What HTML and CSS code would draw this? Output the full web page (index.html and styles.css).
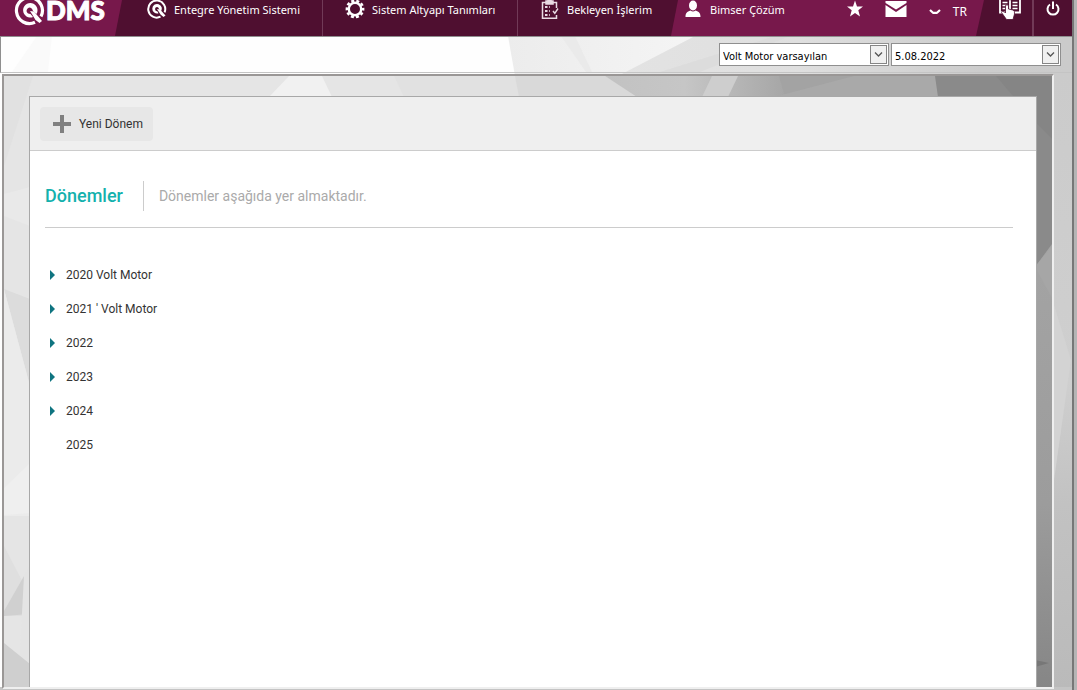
FILE: index.html
```html
<!DOCTYPE html>
<html lang="tr">
<head>
    <title>QDMS - Dönemler</title>
    <meta charset="UTF-8">
    <link rel="stylesheet" href="styles.css">
</head>
<body>
    <div class="page">
        <svg class="backdrop" viewBox="0 0 1072 690" preserveAspectRatio="none" aria-hidden="true">
            <defs>
                <linearGradient id="side" x1="0" y1="0" x2="0" y2="1">
                    <stop offset="0" stop-color="#cbcbcb"/>
                    <stop offset="0.5" stop-color="#cfcfcf"/>
                    <stop offset="0.7" stop-color="#c2c2c2"/>
                    <stop offset="1" stop-color="#bababa"/>
                </linearGradient>
                <linearGradient id="light" x1="0" y1="0" x2="1" y2="0">
                    <stop offset="0" stop-color="#ececec"/>
                    <stop offset="1" stop-color="#f5f5f5"/>
                </linearGradient>
                <linearGradient id="dark" x1="0" y1="0" x2="1" y2="0">
                    <stop offset="0" stop-color="#e3e3e3"/>
                    <stop offset="0.4" stop-color="#dfdfdf"/>
                    <stop offset="0.8" stop-color="#cccccc"/>
                    <stop offset="1" stop-color="#cbcbcb"/>
                </linearGradient>
            </defs>
            <rect width="1072" height="690" fill="#fefefe"/>
            <polygon points="37,36 52,36 48,72 12,72" fill="#fafafa"/>
            <polygon points="508,36 700,36 622,76 515,76" fill="url(#light)"/>
            <polygon points="561,36 575,36 592,72 586,72" fill="#eaeaea"/>
            <polygon points="695,36 1072,36 1072,76 618,76" fill="url(#dark)"/>
            <polygon points="775,36 790,36 700,72 660,72" fill="#dcdcdc"/>
            <rect x="1052" y="72" width="20" height="618" fill="url(#side)"/>
            <rect y="687" width="1072" height="3" fill="#c4c4c4"/>
            <polygon points="1054,305 1071,360 1054,480" fill="#d3d3d3"/>
        </svg>

        <header class="header">
            <a class="logo" href="#" aria-label="QDMS">
                <svg width="32" height="26" viewBox="0 0 32 26" aria-hidden="true">
                    <path d="M21 22.300 A13 13 0 1 1 27 16.500" fill="none" stroke="#fff" stroke-width="3.200"/>
                    <path d="M22.500 14 A7.200 7.200 0 1 0 19 17 L16.500 14 Q13 14 12.500 11 Q13 7.500 16 7.500 Q18.500 8 19 11 Z" fill="#fff"/>
                    <path d="M16 11 L20 11.500 L28 21 L25.500 23 L21.500 20 L18.500 15 Z" fill="#fff"/>
                </svg>
                <span>DMS</span>
            </a>
            <nav class="menu">
                <a href="#">
                    <svg width="20" height="20" viewBox="0 0 20 20" aria-hidden="true">
                        <path d="M13.500 16.700 A8.500 8.500 0 1 1 17.600 12.300" fill="none" stroke="#fff" stroke-width="2"/>
                        <path d="M14 11.500 A4.800 4.800 0 1 0 11.500 13.300 L10.500 11.500 Q8 11 8 9 Q8.200 7 10 7 Q11.500 7.200 12 9 Z" fill="#fff"/>
                        <path d="M10 9 L13 9.500 L18.500 15.500 L16.500 17 L13.500 14.500 Z" fill="#fff"/>
                    </svg>
                    Entegre Yönetim Sistemi
                </a>
                <a href="#">
                    <svg width="20" height="20" viewBox="0 0 20 20" aria-hidden="true">
                        <circle cx="10" cy="9" r="6.200" fill="none" stroke="#fff" stroke-width="2.400"/>
                        <circle cx="10" cy="9" r="8.200" fill="none" stroke="#fff" stroke-width="2.400" stroke-dasharray="3 2.152" stroke-dashoffset="1.500"/>
                    </svg>
                    Sistem Altyapı Tanımları
                </a>
                <a href="#">
                    <svg width="20" height="20" viewBox="0 0 20 20" fill="none" stroke="#e9dbe3" stroke-width="1.500" aria-hidden="true">
                        <path d="M6 2.500 H2.500 V18.300 H16.500 V15 M16.500 8 V2.500 H13"/>
                        <path d="M6 4 H13 V1 H11 V-1 H8 V1 H6 Z" fill="#e9dbe3"/>
                        <path d="M5 7 H7.500 M5 11 H7.500 M5 15 H7.500" stroke-width="2.200"/>
                        <path d="M9 7 H10 M9 11 H10 M9 15 H10"/>
                        <path d="M13 11 L14.800 13.300 L18 8.500"/>
                    </svg>
                    Bekleyen İşlerim
                </a>
            </nav>
            <div class="account">
                <a class="user" href="#">
                    <svg width="16" height="18" viewBox="0 0 16 18" fill="#fff" aria-hidden="true">
                        <ellipse cx="8" cy="5.500" rx="4" ry="5"/>
                        <path d="M0.500 17 C0.500 13 2 11.500 5.500 10.500 Q8 12.500 10.500 10.500 C14 11.500 15.500 13 15.500 17 Z"/>
                    </svg>
                    Bimser Çözüm
                </a>
                <button type="button" aria-label="Sık kullanılanlar">
                    <svg width="18" height="18" viewBox="0 0 18 18" aria-hidden="true">
                        <path d="M9 0.500 L11 6.500 L17 6.500 L12.300 10.300 L14 16.500 L9 13 L4 16.500 L5.700 10.300 L1 6.500 L7 6.500 Z" fill="#fff"/>
                    </svg>
                </button>
                <button type="button" aria-label="Mesajlar">
                    <svg width="22" height="18" viewBox="0 0 22 18" fill="#fff" aria-hidden="true">
                        <path d="M0.500 1 H21.500 V3 L11 9.500 L0.500 3 Z"/>
                        <path d="M0.500 5 L11 12 L21.500 5 V17 H0.500 Z"/>
                    </svg>
                </button>
                <button class="language" type="button">
                    <svg width="12" height="6" viewBox="0 0 12 6" aria-hidden="true">
                        <path d="M1 1 L4 3.800 H8 L11 1" fill="none" stroke="#fff" stroke-width="2.200" stroke-linejoin="round"/>
                    </svg>
                    TR
                </button>
            </div>
            <button class="help" type="button" aria-label="Yardım">
                <svg width="22" height="21" viewBox="0 0 22 21" aria-hidden="true">
                    <path d="M1 -2 H9 L11 0 L13 -2 H21 V12.500 H1 Z M11 0 V12" fill="none" stroke="#fff" stroke-width="1.800"/>
                    <path d="M3.500 2.500 H8.500 M3.500 5.500 H8.500 M3.500 8.500 H8.500 M13.500 2.500 H18.500 M13.500 5.500 H18.500 M13.500 8.500 H18.500" stroke="#fff" stroke-width="1.400"/>
                    <path d="M6.500 5.500 Q8 4 9.500 5.500 V9 L14 10 Q16 11 15.500 14 L14 19.500 H7.500 L2.500 12.500 Q3.500 10.500 5.500 12 L6.500 13 Z" fill="#fff" stroke="#4f0f30" stroke-width="0.800"/>
                </svg>
            </button>
            <button class="power" type="button" aria-label="Çıkış">
                <svg width="14" height="16" viewBox="0 0 14 16" fill="none" stroke="#fff" stroke-width="2" aria-hidden="true">
                    <path d="M4 3.500 A5.500 5.500 0 1 0 10 3.500"/>
                    <path d="M7 0.500 V8"/>
                </svg>
            </button>
        </header>

        <form class="filters">
            <label class="dropdown">
                <select aria-label="Şirket">
                    <option>Volt Motor varsayılan</option>
                </select>
                <svg viewBox="0 0 17 20" aria-hidden="true">
                    <rect x="0.500" y="0.500" width="16" height="18" fill="#f0f0f0" stroke="#858585"/>
                    <path d="M5 7.500 L8.500 11 L12 7.500" fill="none" stroke="#555" stroke-width="1.300"/>
                </svg>
            </label>
            <label class="dropdown">
                <select aria-label="Tarih">
                    <option>5.08.2022</option>
                </select>
                <svg viewBox="0 0 17 20" aria-hidden="true">
                    <rect x="0.500" y="0.500" width="16" height="18" fill="#f0f0f0" stroke="#858585"/>
                    <path d="M5 7.500 L8.500 11 L12 7.500" fill="none" stroke="#555" stroke-width="1.300"/>
                </svg>
            </label>
        </form>

        <div class="frame">
            <svg class="backdrop" viewBox="0 0 1048 611" preserveAspectRatio="none" aria-hidden="true">
                <defs>
                    <linearGradient id="right" x1="0" y1="0" x2="0" y2="1">
                        <stop offset="0" stop-color="#a9a9a9"/>
                        <stop offset="0.7" stop-color="#9c9c9c"/>
                        <stop offset="1" stop-color="#868686"/>
                    </linearGradient>
                    <linearGradient id="top" x1="0" y1="0" x2="1" y2="0">
                        <stop offset="0" stop-color="#c2c2c2"/>
                        <stop offset="0.4" stop-color="#c6c6c6"/>
                        <stop offset="1" stop-color="#a0a0a0"/>
                    </linearGradient>
                </defs>
                <rect width="1048" height="611" fill="#e5e5e5"/>
                <polygon points="0,0 29,0 0,90" fill="#e1e1e1"/>
                <polygon points="0,118 26,111 26,150 0,140" fill="#e9e9e9"/>
                <polygon points="0,213 26,223 26,310" fill="#dcdcdc"/>
                <polygon points="0,213 26,310 26,440 0,440" fill="#ebebeb"/>
                <polygon points="0,412 26,387 26,437 0,439" fill="#efefef"/>
                <polygon points="0,470 26,520 26,540 0,540" fill="#dfdfdf"/>
                <polygon points="0,535 20,500 26,500 26,538 0,540" fill="#d0d0d0"/>
                <polygon points="20,500 26,490 26,611 14,611" fill="#e4e4e4"/>
                <polygon points="0,567 26,588 26,611 0,611" fill="#cfcfcf"/>
                <polygon points="265,21 285,0 318,0 328,21" fill="#f1f1f1"/>
                <polygon points="390,0 515,0 515,21 400,21" fill="#e1e1e1"/>
                <polygon points="511,0 601,0 635,21 515,21" fill="#d9d9d9"/>
                <polygon points="601,0 800,0 800,21 633,21" fill="url(#top)"/>
                <polygon points="708,0 734,0 724,21 698,21" fill="#cecece"/>
                <polygon points="775,0 935,0 935,21 781,21" fill="#a3a3a3"/>
                <polygon points="850,0 932,0 935,21 770,21" fill="#a9a9a9"/>
                <rect x="1030" width="18" height="611" fill="url(#right)"/>
                <polygon points="931,0 1048,0 1048,168 1031,191 1031,21 934,21" fill="#8a8a8a"/>
                <polygon points="992,0 1048,0 1048,63 1031,46" fill="#858585"/>
                <polygon points="1031,191 1048,170 1048,222" fill="#a6a6a6"/>
                <polygon points="1031,584 1045,587 1031,591" fill="#777"/>
            </svg>
            <main class="panel">
                <div class="toolbar">
                    <button class="new-period" type="button">
                        <svg width="18" height="18" viewBox="0 0 18 18" aria-hidden="true">
                            <path d="M9 0 V18 M0 9 H18" stroke="#808080" stroke-width="4"/>
                        </svg>
                        Yeni Dönem
                    </button>
                </div>
                <div class="title">
                    <h1>Dönemler</h1>
                    <p>Dönemler aşağıda yer almaktadır.</p>
                </div>
                <ul class="periods">
                    <li><button class="expand" type="button" aria-label="Genişlet"></button><a href="#">2020 Volt Motor</a></li>
                    <li><button class="expand" type="button" aria-label="Genişlet"></button><a href="#">2021 ' Volt Motor</a></li>
                    <li><button class="expand" type="button" aria-label="Genişlet"></button><a href="#">2022</a></li>
                    <li><button class="expand" type="button" aria-label="Genişlet"></button><a href="#">2023</a></li>
                    <li><button class="expand" type="button" aria-label="Genişlet"></button><a href="#">2024</a></li>
                    <li class="leaf"><a href="#">2025</a></li>
                </ul>
            </main>
        </div>
    </div>
</body>
</html>
```

FILE: styles.css
```css
* {
    box-sizing: border-box;
}
body {
    margin: 0;
    background-color: #b5b5b5;
    font-family: Roboto, Arial, sans-serif;
    font-size: 12px;
    color: #333;
}
button {
    margin: 0;
    padding: 0;
    border: none;
    background: none;
    color: inherit;
    font: inherit;
    cursor: pointer;
}
a {
    color: inherit;
    text-decoration: none;
}
svg {
    display: block;
    flex-shrink: 0;
}
.page {
    position: relative;
    z-index: 0;
    display: flex;
    flex-direction: column;
    min-height: 100vh;
    margin-right: 3px;
    border-right: 2px solid #777;
}
.backdrop {
    position: absolute;
    inset: 0;
    z-index: -1;
    width: 100%;
    height: 100%;
}

/* header */
.header {
    display: flex;
    height: 37px;
    border-bottom: 1px solid #8f8f8f;
    background-color: #4f0f30;
    color: #fff;
    font-family: "Segoe UI", "Noto Sans", sans-serif;
    font-size: 11px;
    line-height: 20px;
}
.logo {
    display: flex;
    width: 122px;
    padding-left: 14px;
    background-color: #77184b;
    clip-path: polygon(0 0, 100% 0, 115px 100%, 0 100%);
    font-family: Lato, sans-serif;
    font-size: 26px;
    font-weight: 900;
    -webkit-text-stroke: 1px #fff;
}
.menu {
    display: grid;
    flex: 1;
    grid-template-columns: 200fr 195fr 154fr;
}
.menu a {
    display: flex;
    gap: 7px;
    padding-left: 25px;
    white-space: nowrap;
}
.menu a + a {
    padding-left: 22px;
    border-left: 1px solid #713a57;
}
.account {
    display: flex;
    width: 313px;
    padding-left: 14px;
    background-color: #77184b;
    clip-path: polygon(7px 0, 100% 0, calc(100% - 8px) 100%, 0 100%);
}
.account button {
    display: flex;
    align-items: flex-start;
    margin-right: 21px;
}
.user {
    display: flex;
    flex: 1;
    gap: 9px;
}
.account .language {
    gap: 12px;
    margin-right: 17px;
    padding-left: 1px;
    font-size: 12px;
    line-height: 24px;
}
.language svg {
    margin-top: 9px;
}
.help,
.power {
    display: flex;
    align-items: flex-start;
    justify-content: center;
}
.help {
    width: 48px;
    padding-left: 4px;
}
.power {
    width: 40px;
    padding-top: 1px;
    border-left: 2px solid #713a57;
}

/* filters */
.filters {
    display: flex;
    justify-content: flex-end;
    gap: 2px;
    height: 36px;
    padding: 6px 11px 0 0;
    border-bottom: 1px solid #c4c4c4;
    border-left: 1px solid #8f8f8f;
}
.dropdown {
    position: relative;
    width: 170px;
    height: 23px;
}
.dropdown select {
    width: 100%;
    height: 100%;
    padding: 3px 20px 0 3px;
    border: 1px solid #8f8f8f;
    border-radius: 0;
    background-color: #fff;
    color: #000;
    font-family: Tahoma, "DejaVu Sans Condensed", "DejaVu Sans", sans-serif;
    font-size: 11px;
    appearance: none;
}
.dropdown svg {
    position: absolute;
    top: 2px;
    right: 2px;
    width: 17px;
    height: 20px;
    pointer-events: none;
}

/* content */
.frame {
    position: relative;
    z-index: 0;
    display: flex;
    flex: 1;
    margin: 1px 18px 1px 2px;
    padding: 20px 15px 0 25px;
    border: 2px solid;
    border-color: #9a9796 #efefef #efefef #9a9796;
}
.panel {
    flex: 1;
    border: 1px solid #a8a8a8;
    border-bottom: none;
    background-color: #fff;
}
.toolbar {
    padding: 10px 10px 9px;
    border-bottom: 1px solid #ccc;
    background-color: #efefef;
}
.new-period {
    display: flex;
    align-items: center;
    gap: 8px;
    height: 34px;
    padding: 0 10px 0 13px;
    border-radius: 4px;
    background-color: #e7e7e7;
}
.title {
    display: flex;
    align-items: center;
    margin: 0 23px 0 15px;
    padding: 30px 0 16px;
    border-bottom: 1px solid #ccc;
}
.title h1 {
    margin: 0;
    padding-right: 20px;
    border-right: 1px solid #ccc;
    color: #14b1ad;
    font-size: 18px;
    font-weight: 500;
    line-height: 30px;
}
.title p {
    margin: 0;
    padding-left: 15px;
    color: #aaa;
    font-size: 14px;
    line-height: 28px;
}
.periods {
    margin: 0;
    padding: 30px 20px;
    list-style: none;
}
.periods li {
    display: flex;
    align-items: center;
    gap: 11px;
    height: 34px;
}
.periods .leaf {
    padding-left: 16px;
}
.expand {
    border: 5px solid transparent;
    border-right: none;
    border-left-color: #0f7480;
}
```
